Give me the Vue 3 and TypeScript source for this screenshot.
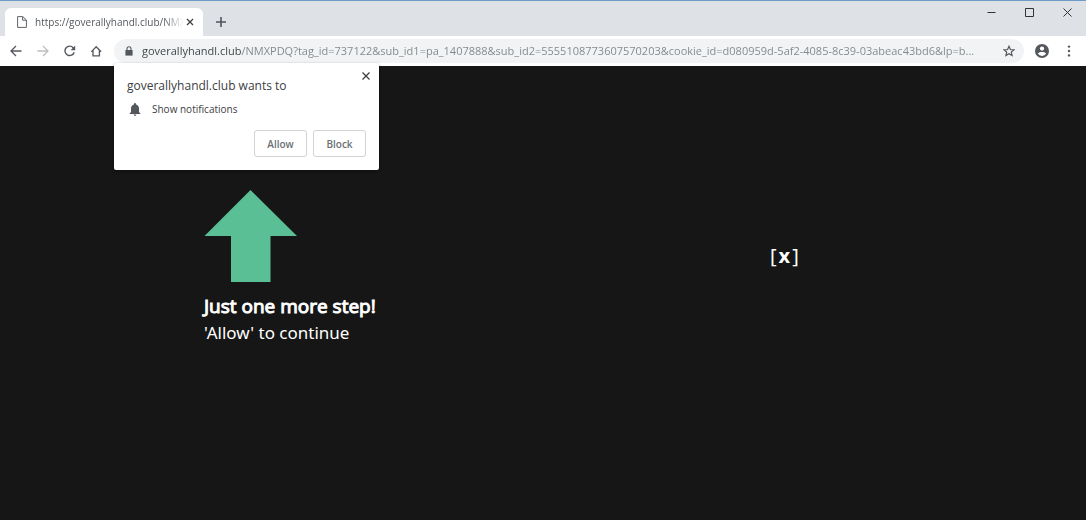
<script setup lang="ts">
import { ref } from 'vue'

const site = 'goverallyhandl.club'
const tabTitle = `https://${site}/NMX`
const address = ref(
  `${site}/NMXPDQ?tag_id=737122&sub_id1=pa_1407888&sub_id2=5555108773607570203&cookie_id=d080959d-5af2-4085-8c39-03abeac43bd6&lp=b...`,
)
</script>

<template>
  <div class="browser">
    <header class="titlebar">
      <div class="tab">
        <svg class="page-icon" width="10" height="12" viewBox="0 0 10 12" fill="none" stroke="#5f6368">
          <path d="M.6.6h5.2L9.4 4v7.4H.6zM5.6.8v3.4h3.6" />
        </svg>
        <span class="tab-title">{{ tabTitle }}</span>
        <button class="icon-btn" aria-label="Close tab">
          <svg width="8" height="8" viewBox="0 0 8 8" stroke="#3c4043" stroke-width="1.3"><path d="M1 1l6 6M7 1L1 7" /></svg>
        </button>
      </div>
      <button class="icon-btn new-tab" aria-label="New tab">
        <svg width="10" height="10" viewBox="0 0 10 10" stroke="#50545a" stroke-width="1.6"><path d="M5 0v10M0 5h10" /></svg>
      </button>
      <div class="window-controls">
        <button class="icon-btn" aria-label="Minimize">
          <svg width="9" height="9" viewBox="0 0 9 9" stroke="#333"><path d="M.5 4.5h8" /></svg>
        </button>
        <button class="icon-btn" aria-label="Maximize">
          <svg width="9" height="9" viewBox="0 0 9 9" fill="none" stroke="#333"><path d="M.5.5h8v8h-8z" /></svg>
        </button>
        <button class="icon-btn" aria-label="Close window">
          <svg width="9" height="9" viewBox="0 0 9 9" stroke="#333"><path d="M.5.5l8 8M8.500.5l-8 8" /></svg>
        </button>
      </div>
    </header>

    <nav class="toolbar">
      <div class="nav-buttons">
        <button class="icon-btn" aria-label="Back">
          <svg width="12" height="12" viewBox="0 0 12 12" fill="none" stroke="#54585d" stroke-width="1.3"><path d="M11.500 6H1.200M6 1L1 6l5 5" /></svg>
        </button>
        <button class="icon-btn" aria-label="Forward">
          <svg width="12" height="12" viewBox="0 0 12 12" fill="none" stroke="#bcbec1" stroke-width="1.3"><path d="M.5 6h10.300M6 1l5 5-5 5" /></svg>
        </button>
        <button class="icon-btn" aria-label="Reload">
          <svg width="12" height="12" viewBox="0 0 12 12" fill="none" stroke="#54585d" stroke-width="1.4"><path d="M10.200 7.200A4.700 4.700 0 1 1 9.200 2.700L10.200 3.800" /><path d="M11.200.6v4.600H6.600z" fill="#54585d" stroke="none" /></svg>
        </button>
        <button class="icon-btn" aria-label="Home">
          <svg width="12" height="12" viewBox="0 0 12 12" fill="none" stroke="#54585d" stroke-width="1.3"><path d="M.3 6.800L5.200 1.800l4.900 5M2 5.600v5.200h6.400V5.600" /></svg>
        </button>
      </div>
      <div class="omnibox">
        <svg class="lock" width="8" height="10" viewBox="0 0 8 10"><path d="M.4 4h7.200v5.600H.4z" fill="#54585d" /><path d="M2 4.200V2.700a2 2 0 0 1 4 0v1.500" fill="none" stroke="#54585d" stroke-width="1.100" /></svg>
        <input v-model="address" class="address" type="text" aria-label="Address" spellcheck="false" />
        <button class="icon-btn" aria-label="Bookmark this page">
          <svg width="12" height="12" viewBox="0 0 12 12" fill="none" stroke="#54585d" stroke-width="1.200"><path d="M6 1.300l1.400 3.200 3.500.3-2.600 2.300.8 3.400L6 8.700l-3.100 1.800.8-3.400L1.100 4.800l3.500-.3z" /></svg>
        </button>
      </div>
      <button class="icon-btn profile" aria-label="Profile">
        <svg width="14" height="14" viewBox="0 0 14 14"><circle cx="7" cy="7" r="7" fill="#54585d" /><circle cx="7" cy="4.600" r="2.100" fill="#fff" /><path d="M2.800 9.600C3.600 8.300 5.600 7.900 7 7.900s3.400.4 4.200 1.700A5 5 0 0 1 7 12a5 5 0 0 1-4.200-2.400z" fill="#fff" /></svg>
      </button>
      <button class="icon-btn menu" aria-label="Menu">
        <svg width="4" height="12" viewBox="0 0 4 12" fill="#54585d"><circle cx="2" cy="1.600" r="1.200" /><circle cx="2" cy="6" r="1.200" /><circle cx="2" cy="10.400" r="1.200" /></svg>
      </button>
    </nav>

    <main class="page">
      <section class="prompt">
        <svg class="arrow" width="93" height="92" viewBox="0 0 93 92" fill="#5abf95"><path d="M46.500 0L93 46H66.500v46H27V46H.5z" /></svg>
        <h1>Just one more step!</h1>
        <p>'Allow' to continue</p>
      </section>
      <section class="dismiss">
        <button class="dismiss-btn" aria-label="Close"><span>[</span><b>x</b><span>]</span></button>
      </section>

      <div class="permission" role="dialog" aria-labelledby="permission-title">
        <button class="icon-btn permission-close" aria-label="Dismiss">
          <svg width="8" height="8" viewBox="0 0 8 8" stroke="#3c4043" stroke-width="1.300"><path d="M.5.5l7 7M7.500.5l-7 7" /></svg>
        </button>
        <h2 id="permission-title">{{ site }} wants to</h2>
        <div class="permission-item">
          <svg width="12" height="13" viewBox="0 0 12 13" fill="#54585d"><path d="M6 0a1 1 0 0 1 1 1v.5c1.900.5 3 2 3 4V9l1.400 1.400v.6H.6v-.6L2 9V5.500c0-2 1.100-3.500 3-4V1a1 1 0 0 1 1-1zM4.700 11.600h2.600a1.300 1.300 0 0 1-2.600 0z" /></svg>
          <span>Show notifications</span>
        </div>
        <div class="permission-actions">
          <button class="choice">Allow</button>
          <button class="choice">Block</button>
        </div>
      </div>
    </main>
  </div>
</template>

<style>
body {
  margin: 0;
  background: #161616;
}
</style>

<style scoped>
.browser {
  display: flex;
  flex-direction: column;
  min-height: 100vh;
  font-family: "Open Sans", "Noto Sans", sans-serif;
  color: #3c4043;
}

.icon-btn {
  display: flex;
  align-items: center;
  justify-content: center;
  flex: none;
  padding: 0;
  border: 0;
  background: none;
}

.titlebar {
  display: flex;
  align-items: flex-end;
  height: 35px;
  padding: 0 14px 0 5px;
  border-top: 1px solid #6f9ac6;
  background: #dee1e6;
}

.tab {
  display: flex;
  align-items: center;
  box-sizing: border-box;
  width: 198px;
  height: 28px;
  padding: 0 9px 0 12px;
  border-radius: 6px 6px 0 0;
  background: #fff;
}

.page-icon {
  flex: none;
  margin-right: 8px;
}

.tab-title {
  flex: 1;
  min-width: 0;
  margin-right: 2px;
  font-size: 10px;
  white-space: nowrap;
  color: #54585d;
  mask-image: linear-gradient(to right, #000 86%, transparent);
}

.new-tab {
  align-self: center;
  margin: 6px 0 0 13px;
}

.window-controls {
  display: flex;
  align-self: flex-start;
  gap: 29px;
  margin: 7px 0 0 auto;
}

.toolbar {
  display: flex;
  align-items: center;
  box-sizing: border-box;
  height: 30px;
  padding: 0 15px 0 10px;
  background: #fff;
}

.nav-buttons {
  display: flex;
  gap: 15px;
}

.omnibox {
  display: flex;
  align-items: center;
  flex: 1;
  min-width: 0;
  box-sizing: border-box;
  height: 24px;
  margin-left: 11px;
  padding: 0 9px 0 11px;
  border-radius: 12px;
  background: #f1f3f4;
}

.lock {
  flex: none;
  margin-right: 9px;
}

.address {
  flex: 1;
  min-width: 0;
  margin: 0 8px 0 0;
  padding: 0;
  border: 0;
  outline: 0;
  font-family: inherit;
  font-size: 11px;
  line-height: 18px;
  text-overflow: ellipsis;
  color: transparent;
  background: linear-gradient(to right, #3c4043 100px, #80868b 100px);
  background-clip: text;
}

.profile {
  margin-left: 11px;
}

.menu {
  margin-left: 18px;
}

.page {
  position: relative;
  display: grid;
  grid-template-columns: 1fr 1fr;
  flex: 1;
  background: #161616;
  color: #fff;
}

.prompt {
  padding: 124px 0 0 204px;
}

.arrow {
  display: block;
}

.prompt h1 {
  margin: 10px 0 0;
  font-size: 19px;
  line-height: 28px;
  font-weight: 400;
  white-space: nowrap;
  -webkit-text-stroke: 1px currentColor;
}

.prompt p {
  margin: 0;
  font-family: "Noto Sans", sans-serif;
  font-size: 17px;
  line-height: 26px;
}

.dismiss {
  padding: 176px 0 0 227px;
}

.dismiss-btn {
  display: flex;
  gap: 2px;
  padding: 0;
  border: 0;
  background: none;
  font-family: "Noto Sans", sans-serif;
  font-size: 20px;
  line-height: 28px;
  color: #fff;
}

.permission {
  position: absolute;
  top: -3px;
  left: 114px;
  box-sizing: border-box;
  width: 265px;
  padding: 13px;
  border-radius: 2px;
  background: #fff;
  box-shadow: 0 1px 3px rgba(0, 0, 0, 0.4);
  color: #3c4043;
}

.permission-close {
  position: absolute;
  top: 9px;
  right: 9px;
}

.permission h2 {
  margin: 0;
  font-size: 12px;
  line-height: 20px;
  font-weight: 400;
}

.permission-item {
  display: flex;
  align-items: center;
  gap: 11px;
  margin: 5px 0 13px 2px;
  font-size: 10px;
  line-height: 16px;
}

.permission-actions {
  display: flex;
  justify-content: flex-end;
  gap: 6px;
}

.choice {
  box-sizing: border-box;
  width: 53px;
  height: 27px;
  padding: 0;
  border: 1px solid #d0d3d7;
  border-radius: 3px;
  background: #fff;
  font-family: inherit;
  font-size: 10px;
  font-weight: 600;
  color: #6b6f74;
}
</style>
